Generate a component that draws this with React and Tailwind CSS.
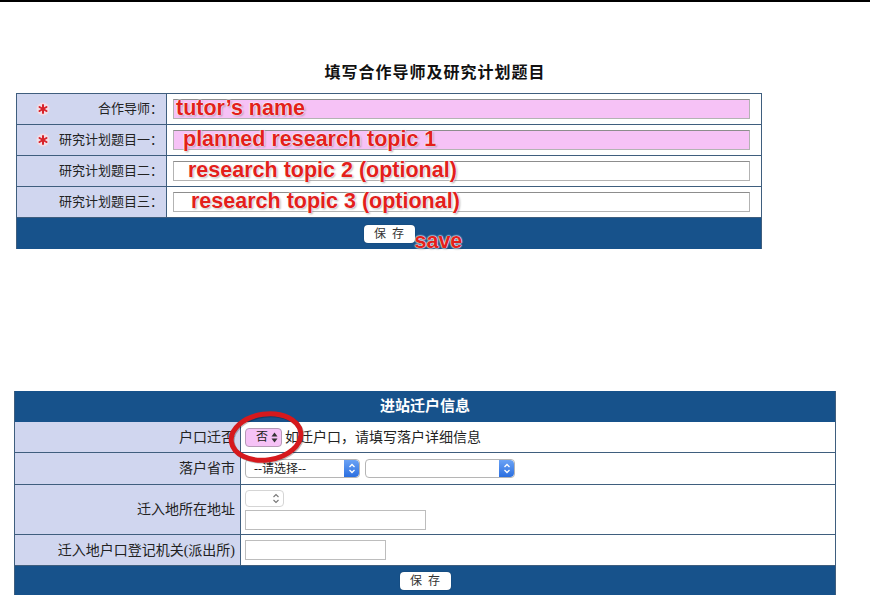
import React from "react";

const serif = { fontFamily: '"Liberation Serif", "Noto Sans CJK SC", serif' };
const ann =
  "font-bold text-[21.5px] leading-none text-[#e3201b] [font-family:'Liberation_Sans',Arial,sans-serif] [text-shadow:0_0_1px_#fff,0_0_2px_#fff,0_0_2px_#fff,1px_1px_2px_rgba(0,0,0,0.4)] whitespace-nowrap";

function Star() {
  return (
    <svg width="14" height="14" viewBox="0 0 14 14" className="shrink-0">
      <circle cx="7" cy="7" r="6.5" fill="#f1dde6" />
      <g stroke="#d8232a" strokeWidth="2" strokeLinecap="round">
        <line x1="7" y1="3" x2="7" y2="11" />
        <line x1="3.5" y1="5" x2="10.5" y2="9" />
        <line x1="3.5" y1="9" x2="10.5" y2="5" />
      </g>
      <circle cx="7" cy="7" r="1.8" fill="#d8232a" />
    </svg>
  );
}

function Row1({ star, label, pink, text, indent }) {
  return (
    <div className="flex h-[31px] border-b border-[#3f5e7e]">
      <div className="w-[150px] shrink-0 bg-[#d0d6ef] border-r border-[#3f5e7e] flex items-center pl-[19px] pr-[3px] text-[13px] text-[#222]" style={serif}>
        <div className="w-[14px] shrink-0">{star && <Star />}</div>
        <div className="flex-1 text-right whitespace-nowrap">{label}</div>
      </div>
      <div className="flex-1 bg-white flex items-center pl-[6px] pr-[11px]">
        <div className={`h-[20px] w-full border border-[#b3b3b3] border-t-[#8d8d8d] flex items-center ${pink ? "bg-[#f6c2f6]" : "bg-white"}`}>
          <span className={ann} style={{ marginLeft: indent }}>{text}</span>
        </div>
      </div>
    </div>
  );
}

function SaveBtn() {
  return (
    <div className="h-[18px] w-[51px] bg-white rounded-[4px] flex items-center justify-center text-[12px] text-[#333] tracking-[6px] pl-[6px] shadow-[0_0_1px_rgba(0,0,0,0.5)]" style={serif}>
      保存
    </div>
  );
}

function BlueArrows() {
  return (
    <div className="w-[15px] h-full bg-gradient-to-b from-[#6aa2f5] to-[#2b6fe0] rounded-r-[4px] flex items-center justify-center">
      <svg width="8" height="11" viewBox="0 0 8 11">
        <path d="M1.5 4 L4 1.5 L6.5 4 M1.5 7 L4 9.5 L6.5 7" stroke="#fff" strokeWidth="1.3" fill="none" />
      </svg>
    </div>
  );
}

function Row2({ label, h = 31, children }) {
  return (
    <div className="flex border-b border-[#3f5e7e]" style={{ height: h }}>
      <div className="w-[226px] shrink-0 bg-[#d0d6ef] border-r border-[#3f5e7e] flex items-center justify-end pr-[5px] text-[14px] text-[#222]" style={serif}>
        {label}
      </div>
      <div className="flex-1 bg-white flex items-center pl-[4px]">{children}</div>
    </div>
  );
}

export default function App() {
  return (
    <div className="w-[870px] h-[607px] bg-white overflow-hidden relative">
      <div className="h-[2px] bg-black" />

      {/* Section 1 */}
      <div className="pt-[62px] text-center font-bold text-[16px] text-[#111] tracking-[1px] leading-[18px]" style={serif}>
        填写合作导师及研究计划题目
      </div>
      <div className="mt-[11px] ml-[16px] w-[746px] border-l border-r border-t border-[#3f5e7e]">
        <Row1 star label="合作导师：" pink text="tutor’s name" indent={2} />
        <Row1 star label="研究计划题目一：" pink text="planned research topic 1" indent={9} />
        <Row1 label="研究计划题目二：" text="research topic 2 (optional)" indent={14} />
        <Row1 label="研究计划题目三：" text="research topic 3 (optional)" indent={17} />
        <div className="h-[31px] bg-[#17528b] flex items-center justify-center">
          <div className="relative mt-[1px]">
            <SaveBtn />
            <span className={`${ann} absolute left-[51px] top-[6px]`}>save</span>
          </div>
        </div>
      </div>

      {/* Section 2 */}
      <div className="mt-[142px] ml-[14px] w-[822px] border-l border-r border-[#3f5e7e] relative">
        <div className="h-[31px] bg-[#17528b] flex items-center justify-center text-white font-bold text-[15px]" style={serif}>
          进站迁户信息
        </div>
        <Row2 label="户口迁否">
          <div className="h-[19px] w-[37px] rounded-[4px] bg-[#f6c2f6] border border-[#b69ab6] flex items-center justify-end pr-[3px] gap-[3px] text-[12px] text-[#222]" style={serif}>
            否
            <svg width="7" height="11" viewBox="0 0 7 11">
              <path d="M0.5 4.5 L3.5 0.5 L6.5 4.5 Z M0.5 6.5 L3.5 10.5 L6.5 6.5 Z" fill="#333" />
            </svg>
          </div>
          <span className="ml-[3px] text-[14px] text-[#222]" style={serif}>如迁户口，请填写落户详细信息</span>
        </Row2>
        <Row2 label="落户省市" h={32}>
          <div className="h-[19px] w-[115px] rounded-[4px] border border-[#b5b5b5] bg-white flex items-stretch overflow-hidden">
            <span className="flex-1 pl-[8px] text-[12px] text-[#222] flex items-center" style={serif}>--请选择--</span>
            <BlueArrows />
          </div>
          <div className="ml-[5px] h-[19px] w-[150px] rounded-[4px] border border-[#b5b5b5] bg-white flex items-stretch overflow-hidden">
            <span className="flex-1" />
            <BlueArrows />
          </div>
        </Row2>
        <Row2 label="迁入地所在地址" h={50}>
          <div className="flex flex-col gap-[3px]">
            <div className="h-[17px] w-[39px] rounded-[4px] border border-[#d5d5d5] bg-white flex items-center justify-end pr-[3px]">
              <svg width="8" height="11" viewBox="0 0 8 11">
                <path d="M1.5 4 L4 1.5 L6.5 4 M1.5 7 L4 9.5 L6.5 7" stroke="#777" strokeWidth="1.1" fill="none" />
              </svg>
            </div>
            <div className="h-[20px] w-[181px] border border-[#bdbdbd] bg-white" />
          </div>
        </Row2>
        <Row2 label="迁入地户口登记机关(派出所)">
          <div className="h-[20px] w-[141px] border border-[#bdbdbd] bg-white" />
        </Row2>
        <div className="h-[29px] bg-[#17528b] flex items-center justify-center">
          <SaveBtn />
        </div>

        {/* red circle annotation */}
        <svg className="absolute left-[202px] top-[17px]" width="92" height="58" viewBox="0 0 92 58">
          <ellipse cx="50" cy="30" rx="35" ry="23" transform="rotate(-8 50 30)" fill="none" stroke="rgba(0,0,0,0.25)" strokeWidth="5" />
          <ellipse cx="49" cy="29" rx="35" ry="23" transform="rotate(-8 49 29)" fill="none" stroke="#d6191d" strokeWidth="5" />
        </svg>
      </div>
    </div>
  );
}
